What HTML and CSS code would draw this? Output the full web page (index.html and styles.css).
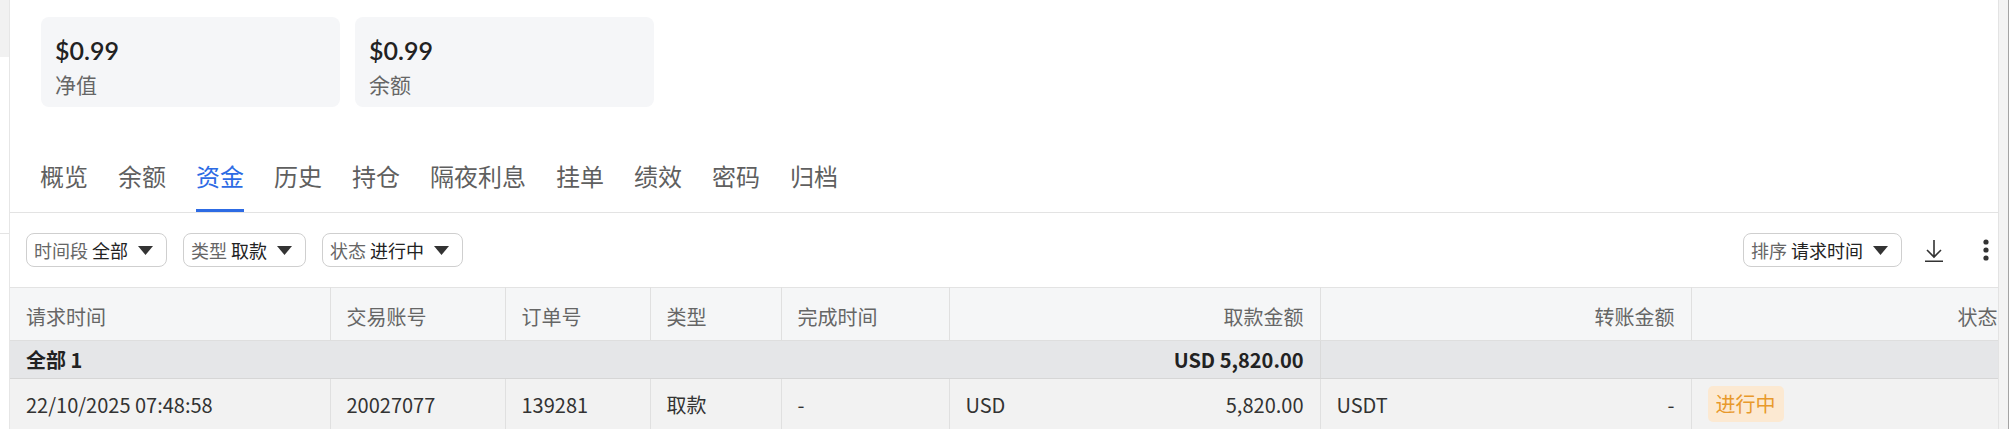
FILE: index.html
```html
<!DOCTYPE html>
<html lang="zh-CN">
<head>
    <meta charset="UTF-8">
    <meta name="viewport" content="width=device-width, initial-scale=1.0">
    <title>资金</title>
    <link rel="stylesheet" href="styles.css">
</head>
<body>
    <div class="page">
        <div class="side-edge">
            <div class="side-top"></div>
            <div class="side-line"></div>
        </div>

        <main class="panel">
            <div class="cards">
                <div class="card">
                    <div class="card-value">$0.99</div>
                    <div class="card-label">净值</div>
                </div>
                <div class="card">
                    <div class="card-value">$0.99</div>
                    <div class="card-label">余额</div>
                </div>
            </div>

            <nav class="tabs">
                <a class="tab">概览</a>
                <a class="tab">余额</a>
                <a class="tab active">资金</a>
                <a class="tab">历史</a>
                <a class="tab">持仓</a>
                <a class="tab">隔夜利息</a>
                <a class="tab">挂单</a>
                <a class="tab">绩效</a>
                <a class="tab">密码</a>
                <a class="tab">归档</a>
            </nav>

            <div class="toolbar">
                <div class="filters">
                    <button class="select">
                        <span class="select-label">时间段</span>
                        <span class="select-value">全部</span>
                        <svg class="caret" viewBox="0 0 15 9"><polygon points="0,0 15,0 7.5,9"/></svg>
                    </button>
                    <button class="select">
                        <span class="select-label">类型</span>
                        <span class="select-value">取款</span>
                        <svg class="caret" viewBox="0 0 15 9"><polygon points="0,0 15,0 7.5,9"/></svg>
                    </button>
                    <button class="select">
                        <span class="select-label">状态</span>
                        <span class="select-value">进行中</span>
                        <svg class="caret" viewBox="0 0 15 9"><polygon points="0,0 15,0 7.5,9"/></svg>
                    </button>
                </div>
                <div class="actions">
                    <button class="select">
                        <span class="select-label">排序</span>
                        <span class="select-value">请求时间</span>
                        <svg class="caret" viewBox="0 0 15 9"><polygon points="0,0 15,0 7.5,9"/></svg>
                    </button>
                    <button class="icon-btn download">
                        <svg viewBox="0 0 18 23" width="18" height="23">
                            <path d="M9 1 V18 M2 11 L9 18 L16 11 M0 22.2 H18" fill="none" stroke="#333" stroke-width="1.6"/>
                        </svg>
                    </button>
                    <button class="icon-btn more">
                        <svg viewBox="0 0 6 22" width="6" height="22">
                            <circle cx="3" cy="3" r="2.6"/>
                            <circle cx="3" cy="11" r="2.6"/>
                            <circle cx="3" cy="19" r="2.6"/>
                        </svg>
                    </button>
                </div>
            </div>

            <div class="table-wrap">
                <table>
                    <colgroup>
                        <col style="width: 320px">
                        <col style="width: 175px">
                        <col style="width: 145px">
                        <col style="width: 131px">
                        <col style="width: 168px">
                        <col style="width: 371px">
                        <col style="width: 371px">
                        <col style="width: 323px">
                    </colgroup>
                    <thead>
                        <tr>
                            <th>请求时间</th>
                            <th>交易账号</th>
                            <th>订单号</th>
                            <th>类型</th>
                            <th>完成时间</th>
                            <th class="num">取款金额</th>
                            <th class="num">转账金额</th>
                            <th class="num">状态</th>
                        </tr>
                    </thead>
                    <tbody>
                        <tr class="group-row">
                            <td colspan="6" class="group-main">
                                <div class="split"><span>全部 1</span><span>USD 5,820.00</span></div>
                            </td>
                            <td colspan="2"></td>
                        </tr>
                        <tr class="data-row">
                            <td>22/10/2025 07:48:58</td>
                            <td>20027077</td>
                            <td>139281</td>
                            <td>取款</td>
                            <td>-</td>
                            <td><div class="split"><span>USD</span><span>5,820.00</span></div></td>
                            <td><div class="split"><span>USDT</span><span>-</span></div></td>
                            <td><span class="badge">进行中</span></td>
                        </tr>
                    </tbody>
                </table>
            </div>
        </main>

        <div class="scroll-edge"></div>
    </div>
</body>
</html>
```

FILE: styles.css
```css
body {
    margin: 0;
    font-family: "Noto Sans CJK SC", sans-serif;
    background-color: #fff;
    color: #333;
    height: 429px;
    overflow: hidden;
}

.page {
    display: flex;
    height: 429px;
}

.side-edge {
    width: 9px;
    border-right: 1px solid #e6e6e6;
    flex-shrink: 0;
}

.side-top {
    height: 57px;
    background-color: #f1f1f1;
}

.side-line {
    margin-top: 176px;
    height: 1px;
    background-color: #e4e4e4;
}

.panel {
    flex: 1;
    min-width: 0;
    overflow: hidden;
}

.scroll-edge {
    width: 9px;
    flex-shrink: 0;
    background-color: #f3f3f3;
    border-left: 1px solid #e3e3e3;
    border-right: 1px solid #a3a3a3;
    margin-right: 1px;
}

/* cards */

.cards {
    display: flex;
    gap: 15px;
    padding: 17px 0 0 31px;
}

.card {
    width: 271px;
    padding: 18px 14px 8px;
    background-color: #f5f6f8;
    border-radius: 8px;
}

.card-value {
    font-family: Lato, "Noto Sans CJK SC", sans-serif;
    font-size: 25px;
    font-weight: 600;
    line-height: 30px;
    color: #222;
}

.card-label {
    margin-top: 4px;
    font-size: 21px;
    line-height: 30px;
    color: #666;
}

/* tabs */

.tabs {
    display: flex;
    gap: 30px;
    margin-top: 53px;
    padding-left: 30px;
    border-bottom: 1px solid #e3e3e3;
}

.tab {
    font-size: 24px;
    line-height: 32px;
    color: #5f5f5f;
    padding-bottom: 17px;
    border-bottom: 3px solid transparent;
    cursor: pointer;
}

.tab.active {
    color: #2d6be4;
    border-bottom-color: #2d6be4;
}

/* toolbar */

.toolbar {
    display: flex;
    justify-content: space-between;
    align-items: center;
    margin-top: 20px;
    padding: 0 9px 0 16px;
}

.filters, .actions {
    display: flex;
    align-items: center;
}

.filters {
    gap: 16px;
}

.select {
    display: flex;
    align-items: center;
    gap: 4px;
    height: 34px;
    padding: 0 13px 0 7px;
    border: 1px solid #cfcfcf;
    border-radius: 8px;
    background-color: #fff;
    font-family: inherit;
    font-size: 18px;
    line-height: 32px;
    cursor: pointer;
}

.select-label {
    color: #666;
}

.select-value {
    color: #222;
}

.caret {
    width: 15px;
    height: 9px;
    margin-left: 6px;
    fill: #333;
}

.icon-btn {
    display: flex;
    align-items: center;
    padding: 0;
    border: none;
    background: none;
    cursor: pointer;
}

.download {
    margin-left: 23px;
}

.more {
    margin-left: 40px;
    fill: #333;
}

/* table */

.table-wrap {
    margin-top: 20px;
    overflow: hidden;
}

table {
    width: 2004px;
    table-layout: fixed;
    border-collapse: collapse;
    font-size: 20px;
}

th, td {
    padding: 0 16px;
    text-align: left;
    white-space: nowrap;
}

th {
    height: 47px;
    padding-top: 5px;
    font-weight: 400;
    color: #666;
    background-color: #f5f6f7;
    border-top: 1px solid #e3e3e3;
    border-bottom: 1px solid #dedede;
    border-right: 1px solid #e0e0e0;
}

th.num {
    text-align: right;
}

.group-row td {
    height: 37px;
    background-color: #e5e6e8;
    font-weight: 700;
    color: #222;
    border-bottom: 1px solid #d6d6d6;
}

.group-row .group-main {
    border-right: 1px solid #dadada;
}

.data-row td {
    height: 50px;
    background-color: #f2f2f2;
    color: #333;
    border-right: 1px solid #e0e0e0;
    border-bottom: 1px solid #e0e0e0;
}

.split {
    display: flex;
    justify-content: space-between;
}

.badge {
    display: inline-block;
    padding: 0 8px;
    line-height: 36px;
    border-radius: 5px;
    background-color: #fce9d2;
    color: #e8992c;
}
```
